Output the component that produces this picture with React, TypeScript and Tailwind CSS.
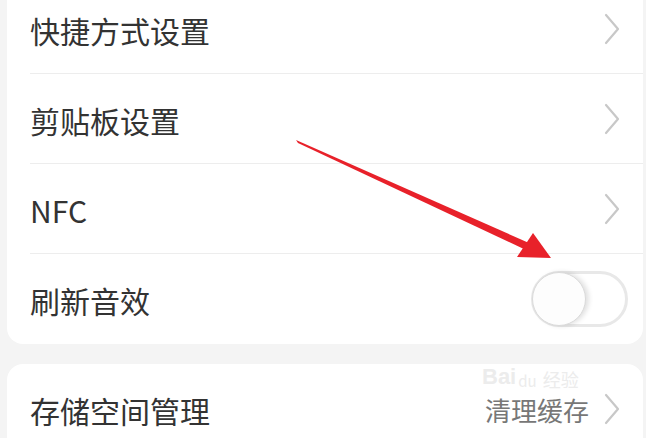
import React from 'react';

const Chevron: React.FC = () => (
  <svg width="18" height="32" viewBox="0 0 18 32" className="shrink-0">
    <path d="M3 2 L15 16 L3 30" fill="none" stroke="#c8c8c8" strokeWidth="2.2" strokeLinecap="round" strokeLinejoin="round" />
  </svg>
);

const Toggle: React.FC = () => (
  <div className="relative w-[97px] h-[56px] rounded-full border-[3px] border-[#e8e8e8] bg-white shrink-0 mr-[-7px]">
    <div className="absolute left-[-2px] top-[-2px] w-[54px] h-[54px] rounded-full bg-[#fdfdfd] border border-[#dadada] shadow-[3px_0_5px_rgba(0,0,0,0.12)]" />
  </div>
);

const Row: React.FC<{ label: string; last?: boolean; right?: React.ReactNode }> = ({ label, last, right }) => (
  <div className={`flex items-center h-[90px] pr-[22px] ${last ? '' : 'border-b border-[#ededed]'}`}>
    <span className="flex-1 text-[30px] text-[#333333] leading-none pt-[2px]">{label}</span>
    {right ?? <Chevron />}
  </div>
);

const App: React.FC = () => {
  return (
    <div
      className="relative w-[646px] h-[438px] overflow-hidden bg-[#f4f4f4]"
      style={{ fontFamily: '"Noto Sans CJK SC", "Noto Sans", sans-serif' }}
    >
      {/* settings card */}
      <div className="mt-[-16px] ml-[7px] mr-[3px] bg-white rounded-[16px] pl-[23px]">
        <Row label="快捷方式设置" />
        <Row label="剪贴板设置" />
        <Row label="NFC" />
        <Row label="刷新音效" last right={<Toggle />} />
      </div>

      {/* storage card */}
      <div className="mt-[20px] ml-[7px] mr-[3px] bg-white rounded-[16px] pl-[23px]">
        <div className="flex items-center h-[90px] pr-[22px]">
          <span className="flex-1 text-[30px] text-[#333333] leading-none pt-[2px]">存储空间管理</span>
          <span className="text-[26px] text-[#777777] leading-none pt-[2px] mr-[14px]">清理缓存</span>
          <Chevron />
        </div>
      </div>

      {/* watermark */}
      <div className="absolute left-[482px] top-[366px] flex items-end gap-[2px] text-[#ececec] pointer-events-none">
        <span className="text-[22px] font-bold leading-none" style={{ fontFamily: '"Liberation Sans", sans-serif' }}>Bai</span>
        <span className="text-[15px] leading-none">du</span>
        <span className="text-[18px] leading-none ml-[4px]">经验</span>
      </div>

      {/* red arrow annotation */}
      <svg className="absolute inset-0 pointer-events-none" width="646" height="438" viewBox="0 0 646 438">
        <polygon points="296,140 298,143 526,250 529,243" fill="#e8212a" />
        <polygon points="551,258 517,257 533,233" fill="#e8212a" />
      </svg>
    </div>
  );
};

export default App;
